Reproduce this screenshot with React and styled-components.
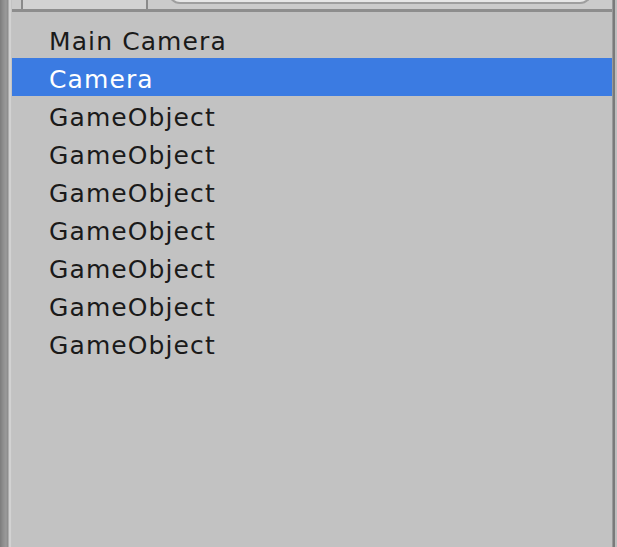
import React from 'react'
import styled, { createGlobalStyle } from 'styled-components'

const Global = createGlobalStyle`
html,body{margin:0;padding:0;background:#c2c2c2;}
#root{width:617px;height:547px;overflow:hidden;}
`
const Window = styled.div`
display:flex;
width:617px;
height:547px;
background:#c2c2c2;
font-family:"DejaVu Sans",Verdana,sans-serif;
`
const LeftEdge = styled.div`
width:12px;
flex-shrink:0;
background:linear-gradient(to right,#7c7c7c 0px,#8e8e8e 3px,#9a9a9a 6px,#8a8a8a 8px,#d2d2d2 9px,#d2d2d2 11px,#b4b4b4 12px);
`
const RightEdge = styled.div`
width:5px;
flex-shrink:0;
background:linear-gradient(to right,#b8b8b8 0px,#7a7a7a 1px,#7a7a7a 3px,#bdbdbd 3px);
`
const Panel = styled.div`
flex:1;
display:flex;
flex-direction:column;
min-width:0;
`
const Toolbar = styled.div`
height:9px;
display:flex;
align-items:flex-end;
background:#cbcbcb;
border-bottom:3px solid #8d8d8d;
overflow:hidden;
`
const CreateButton = styled.div`
width:123px;
height:9px;
margin-left:9px;
border-left:2px solid #8a8a8a;
border-right:2px solid #8a8a8a;
background:#d2d2d2;
`
const Search = styled.div`
flex:1;
height:12px;
margin:0 20px 5px 20px;
border:2px solid #9e9e9e;
border-top:none;
border-radius:0 0 12px 12px;
background:#e6e6e6;
`
const List = styled.div`
display:flex;
flex-direction:column;
padding-top:8px;
`
const Row = styled.div`
height:38px;
box-sizing:border-box;
padding-top:4px;
display:flex;
align-items:center;
padding-left:37px;
font-size:25px;
letter-spacing:1.1px;
color:${p=>p.selected?'#ffffff':'#1a1a1a'};
background:${p=>p.selected?'#3b7be2':'transparent'};
white-space:nowrap;
`

const items = ['Main Camera','Camera','GameObject','GameObject','GameObject','GameObject','GameObject','GameObject','GameObject']

export default function App(){
  return <Window>
    <Global/>
    <LeftEdge/>
    <Panel>
      <Toolbar>
        <CreateButton/>
        <Search/>
      </Toolbar>
      <List>
        {items.map((name,i)=><Row key={i} selected={i===1}>{name}</Row>)}
      </List>
    </Panel>
    <RightEdge/>
  </Window>
}
